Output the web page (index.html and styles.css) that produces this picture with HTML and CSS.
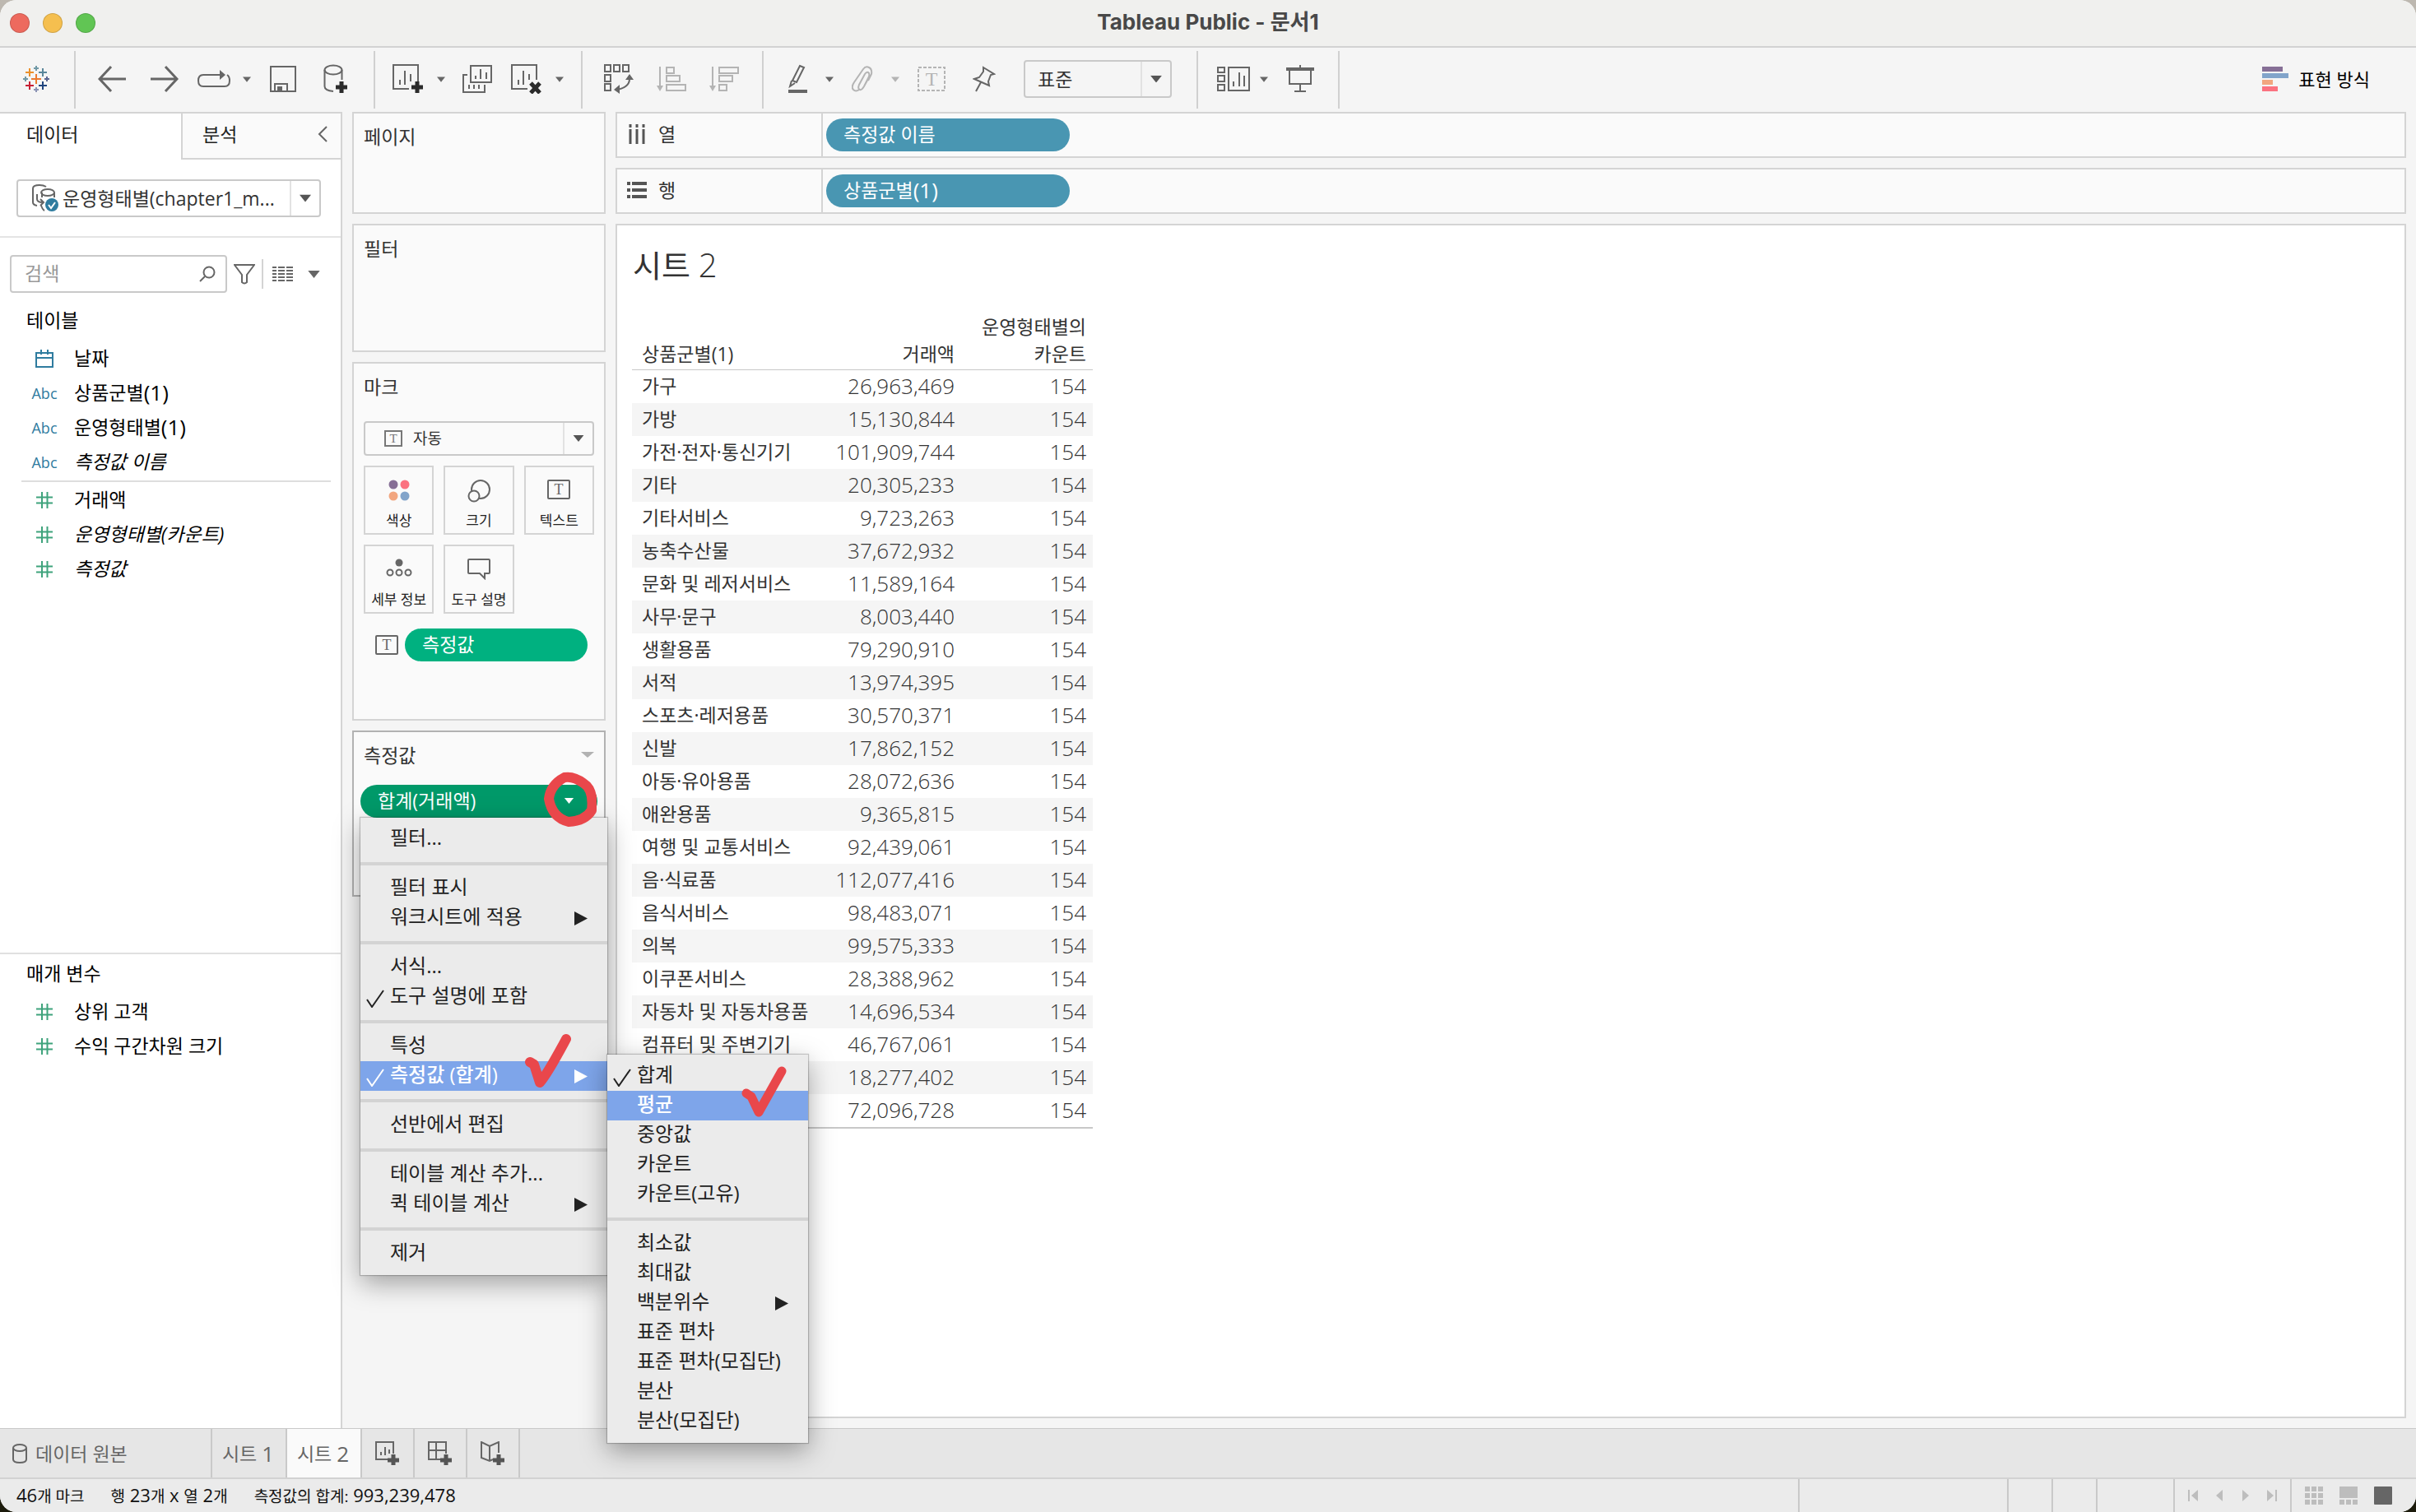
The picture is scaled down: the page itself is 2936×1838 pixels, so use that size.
FILE: index.html
```
<!DOCTYPE html>
<html lang="ko">

<head>
    <meta charset="UTF-8">
    <meta name="viewport" content="width=device-width, initial-scale=1.0">
    <title>Tableau Public - 문서1</title>
    <link rel="stylesheet" href="styles.css">
</head>

<body>
    <!-- shared icons -->
    <svg class="defs" aria-hidden="true">
        <symbol id="i-caret" viewBox="0 0 16 10"><path d="M0 0h16L8 10z" fill="currentColor"/></symbol>
        <symbol id="i-hash" viewBox="0 0 20 20"><path d="M7 0v20M13.500 0v20M0 6.500h20M0 13.500h20" fill="none" stroke="currentColor" stroke-width="2"/></symbol>
        <symbol id="i-check" viewBox="0 0 22 22"><path d="M1 12l6 9L21 1" fill="none" stroke="currentColor" stroke-width="2"/></symbol>
        <symbol id="i-arrow" viewBox="0 0 16 17"><path d="M0 0l16 8.500L0 17z" fill="currentColor"/></symbol>
    </svg>

    <div class="window">
        <header class="titlebar">
            <div class="lights"><span class="red"></span><span class="yellow"></span><span class="green"></span></div>
            <h1>Tableau Public - 문서1</h1>
        </header>

        <div class="toolbar">
            <div class="group">
                <button class="tool wide" aria-label="Tableau">
                    <svg width="34" height="34" viewBox="0 0 34 34" fill="none" stroke-width="2">
                        <path d="M17 11v12M11 17h12" stroke="#eb7b30"/>
                        <path d="M9 4v10M4 9h10" stroke="#eb912c"/>
                        <path d="M25 4v10M20 9h10" stroke="#5b879b"/>
                        <path d="M9 20v10M4 25h10" stroke="#c72035"/>
                        <path d="M25 20v10M20 25h10" stroke="#1f447e"/>
                        <path d="M17 1v6M14 4h6M4 14v6M1 17h6" stroke="#7199a6"/>
                        <path d="M30 14v6M27 17h6" stroke="#5c6692"/>
                        <path d="M17 27v6M14 30h6" stroke="#8b93b5"/>
                    </svg>
                </button>
            </div>
            <div class="group">
                <button class="tool wide" aria-label="실행 취소"><svg width="34" height="34" viewBox="0 0 34 34"><path class="ln thick" d="M16 2L2 17l14 15M2 17h32"/></svg></button>
                <button class="tool wide" aria-label="다시 실행"><svg width="34" height="34" viewBox="0 0 34 34"><path class="ln thick" d="M18 2l14 15-14 15M32 17H0"/></svg></button>
                <button class="tool" aria-label="재생"><svg width="40" height="22" viewBox="0 0 40 22"><path class="ln" d="M28 6H7Q1 6 1 13t6 7h26q6 0 6-7 0-5-3-7"/><path class="fl" d="M27 0l7 6-7 6z"/></svg></button>
                <button class="tool drop" aria-label="재생 옵션"><svg width="10" height="7"><use href="#i-caret"/></svg></button>
                <button class="tool wide" aria-label="저장"><svg width="32" height="32" viewBox="0 0 32 32"><path class="ln" d="M1 1h30v30H1zM6 31V22h15v9"/><path class="fl" d="M9 25h6v6H9z"/></svg></button>
                <button class="tool wide" aria-label="새 데이터 원본"><svg width="30" height="36" viewBox="0 0 30 36"><ellipse class="ln" cx="12" cy="7" rx="10.500" ry="5.500"/><path class="ln" d="M1.500 7v20q0 5 10.500 6M22.500 7v12"/><path class="plus" d="M22 21v14M15 28h14"/></svg></button>
            </div>
            <div class="group">
                <button class="tool" aria-label="새 워크시트"><svg width="38" height="36" viewBox="0 0 38 36"><path class="ln" d="M31 21V1H1v29h19M9 25v-6M15 25V8M22 21v-9"/><path class="plus" d="M30 21v14M23 28h14"/></svg></button>
                <button class="tool drop" aria-label="새 워크시트 옵션"><svg width="10" height="7"><use href="#i-caret"/></svg></button>
                <button class="tool wide" aria-label="시트 복제"><svg width="36" height="34" viewBox="0 0 36 34"><path class="ln" d="M10 1h25v20H10zM16 17v-4M22 17V5M29 17V9M6 12H1v21h26v-9M8 29v-5M14 29v-5M20 29v-5"/></svg></button>
                <button class="tool" aria-label="시트 지우기"><svg width="38" height="36" viewBox="0 0 38 36"><path class="ln" d="M31 19V1H1v29h19M9 25v-6M15 25V8M22 19v-7"/><path class="plus" d="M24 23l11 12M35 23L24 35"/></svg></button>
                <button class="tool drop" aria-label="지우기 옵션"><svg width="10" height="7"><use href="#i-caret"/></svg></button>
            </div>
            <div class="group">
                <button class="tool wide" aria-label="행과 열 바꾸기"><svg width="36" height="36" viewBox="0 0 36 36"><path class="ln" d="M1 1h7v8H1zM12 1h7v8h-7zM23 1h7v8h-7zM1 13h7v8H1zM1 24h7v8H1zM31 18q0 10-15 13"/><path class="fl" d="M26 19l5-7 5 7zM19 25l-7 6 7 5z"/></svg></button>
                <button class="tool wide off" aria-label="오름차순 정렬"><svg width="36" height="32" viewBox="0 0 36 32"><path class="ln" d="M4 1v25M12 2h9v7h-9zM12 12h16v7H12zM12 23h23v7H12z"/><path class="fl" d="M0 24h8l-4 7z"/></svg></button>
                <button class="tool wide off" aria-label="내림차순 정렬"><svg width="36" height="32" viewBox="0 0 36 32"><path class="ln" d="M4 1v25M12 2h23v7H12zM12 12h16v7H12zM12 23h9v7h-9z"/><path class="fl" d="M0 24h8l-4 7z"/></svg></button>
            </div>
            <div class="group last-select">
                <button class="tool" aria-label="하이라이트"><svg width="28" height="36" viewBox="-4 0 28 36"><path class="ln" d="M14 2l5 2-9 18-5-2zM4 20l-2 7 6-4"/><path class="fl" d="M0 31h23v4H0z"/></svg></button>
                <button class="tool drop" aria-label="하이라이트 옵션"><svg width="10" height="7"><use href="#i-caret"/></svg></button>
                <button class="tool off" aria-label="그룹"><svg width="26" height="32" viewBox="0 0 26 32"><path class="ln" d="M21 14l-6 11q-3 5-5 4-3-1-1-6l7-13q2-3 4-2t1 5l-6 12M9 29q-4 3-7 0t1-9L14 4q3-4 7-2t3 8l-4 8"/></svg></button>
                <button class="tool drop off" aria-label="그룹 옵션"><svg width="10" height="7"><use href="#i-caret"/></svg></button>
                <button class="tool wide off" aria-label="마크 레이블 표시"><svg width="34" height="30" viewBox="0 0 34 30"><rect class="ln" x="1" y="1" width="32" height="28" stroke-dasharray="4 2"/><text x="17" y="23" text-anchor="middle" font-family="Liberation Serif, serif" font-size="24" fill="currentColor">T</text></svg></button>
                <button class="tool wide" aria-label="축 고정"><svg width="28" height="32" viewBox="0 0 28 32"><path class="ln" d="M13 2l13 8-4 1-3 8 1 5L2 16l6-2 5-7zM10 20L4 31"/></svg></button>
                <div class="select fit">
                    <select aria-label="맞춤"><option>표준</option></select>
                    <svg width="14" height="9"><use href="#i-caret"/></svg>
                </div>
            </div>
            <div class="group">
                <button class="tool" aria-label="카드 표시/숨기기"><svg width="46" height="30" viewBox="-6 0 46 30"><path class="ln" d="M1 1h8v6H1zM1 11h8v7H1zM1 22h8v7H1zM14 1h25v28H14zM20 24v-6M27 24V7M33 24V11"/></svg></button>
                <button class="tool drop" aria-label="카드 옵션"><svg width="10" height="7"><use href="#i-caret"/></svg></button>
                <button class="tool wide" aria-label="프레젠테이션 모드"><svg width="34" height="34" viewBox="0 0 34 34"><path class="fl" d="M0 3h34v4H0z"/><path class="ln" d="M17 0v4M4 7v16h26V7M17 23v9M10 32h14"/></svg></button>
            </div>
            <button class="showme">
                <svg width="32" height="30" viewBox="0 0 32 30"><path d="M0 0h25v6H0z" fill="#866f96"/><path d="M0 8h32v6H0z" fill="#82a4ca"/><path d="M0 16h13v6H0z" fill="#f2a67f"/><path d="M0 24h19v6H0z" fill="#fb7280"/></svg>
                표현 방식
            </button>
        </div>

        <main class="workspace">
            <aside class="data-pane">
                <div class="pane-tabs">
                    <button class="pane-tab active">데이터</button>
                    <button class="pane-tab">분석 <svg width="12" height="20" viewBox="0 0 12 20"><path class="ln" d="M11 1L2 10l9 9"/></svg></button>
                </div>
                <div class="source">
                    <div class="select">
                        <svg class="lead" width="34" height="34" viewBox="0 0 34 34">
                            <path class="ln" d="M2 5q0-4 8-4 5 0 8 2M2 5v17q0 3 5 4M7 12v6q0 4 7 4M11 18l4 4-4 4M13 10v6M28 10v6M12 26q2 5 4 6"/><ellipse class="ln" cx="20" cy="10" rx="8" ry="4"/>
                            <circle cx="25" cy="25" r="8" fill="#2f7c9f"/><path d="M21 25l3 4 5-7" fill="none" stroke="#fff" stroke-width="2"/>
                        </svg>
                        <select aria-label="데이터 원본"><option>운영형태별(chapter1_m...</option></select>
                        <svg width="14" height="11"><use href="#i-caret"/></svg>
                    </div>
                </div>
                <div class="search-row">
                    <div class="search">
                        <input type="text" placeholder="검색" aria-label="검색">
                        <svg width="20" height="20" viewBox="0 0 20 20"><circle class="ln" cx="12" cy="8" r="6.500"/><path class="ln" d="M7 13l-6 6"/></svg>
                    </div>
                    <button aria-label="필터"><svg width="26" height="26" viewBox="0 0 26 26"><path class="ln" d="M1 2h24l-9 12v9q-3 3-6 0v-9z"/></svg></button>
                    <button class="view-mode" aria-label="보기">
                        <svg width="25" height="20" viewBox="0 0 25 20"><path d="M0 2h25M0 6h25M0 10h25M0 14h25M0 18h25" stroke="#666" stroke-width="2" stroke-dasharray="5 2 8 2 8 0"/></svg>
                        <svg width="15" height="9"><use href="#i-caret"/></svg>
                    </button>
                </div>
                <section class="fields">
                    <h2>테이블</h2>
                    <ul class="dims">
                        <li><span class="type"><svg width="22" height="22" viewBox="0 0 22 22"><path d="M1 4h20v17H1zM1 10h20M7 0v6M15 0v6" fill="none" stroke="currentColor" stroke-width="2"/></svg></span>날짜</li>
                        <li><span class="type">Abc</span>상품군별<span class="lat">(1)</span></li>
                        <li><span class="type">Abc</span>운영형태별<span class="lat">(1)</span></li>
                        <li><span class="type">Abc</span><em>측정값 이름</em></li>
                    </ul>
                    <ul class="measures">
                        <li><span class="type"><svg width="20" height="20"><use href="#i-hash"/></svg></span>거래액</li>
                        <li><span class="type"><svg width="20" height="20"><use href="#i-hash"/></svg></span><em>운영형태별(카운트)</em></li>
                        <li><span class="type"><svg width="20" height="20"><use href="#i-hash"/></svg></span><em>측정값</em></li>
                    </ul>
                </section>
                <section class="params">
                    <h2>매개 변수</h2>
                    <ul class="measures">
                        <li><span class="type"><svg width="20" height="20"><use href="#i-hash"/></svg></span>상위 고객</li>
                        <li><span class="type"><svg width="20" height="20"><use href="#i-hash"/></svg></span>수익 구간차원 크기</li>
                    </ul>
                </section>
            </aside>

            <div class="cards">
                <section class="card pages"><h2>페이지</h2></section>
                <section class="card filters"><h2>필터</h2></section>
                <section class="card marks">
                    <h2>마크</h2>
                    <div class="select mark-type">
                        <svg class="lead" width="22" height="20" viewBox="0 0 22 20"><rect class="ln" x="1" y="1" width="20" height="18"/><text x="11" y="15" text-anchor="middle" font-family="Liberation Serif, serif" font-size="15" fill="currentColor">T</text></svg>
                        <select aria-label="마크 유형"><option>자동</option></select>
                        <svg width="14" height="8"><use href="#i-caret"/></svg>
                    </div>
                    <div class="mark-grid">
                        <button><svg width="26" height="26" viewBox="0 0 26 26"><circle cx="6" cy="6" r="5.500" fill="#866f96"/><circle cx="20" cy="6" r="5.500" fill="#fb7280"/><circle cx="6" cy="20" r="5.500" fill="#f2a67f"/><circle cx="20" cy="20" r="5.500" fill="#82a4ca"/></svg>색상</button>
                        <button><svg width="28" height="28" viewBox="0 0 28 28"><circle class="ln" cx="16" cy="12" r="11"/><circle cx="8" cy="20" r="6.500" fill="#fafafa" stroke="currentColor" stroke-width="2"/></svg>크기</button>
                        <button><svg width="28" height="24" viewBox="0 0 28 24"><rect class="ln" x="1" y="1" width="26" height="22" rx="1"/><text x="14" y="18" text-anchor="middle" font-family="Liberation Serif, serif" font-size="18" fill="currentColor">T</text></svg>텍스트</button>
                        <button><svg width="32" height="22" viewBox="0 0 32 22"><circle class="fl" cx="16" cy="5" r="4.500"/><circle class="ln" cx="5" cy="17" r="3.500"/><circle class="ln" cx="16" cy="17" r="3.500"/><circle class="ln" cx="27" cy="17" r="3.500"/></svg>세부 정보</button>
                        <button><svg width="28" height="26" viewBox="0 0 28 26"><path class="ln" d="M2 1h24q1 0 1 1v15q0 1-1 1h-5v6l-6-6H2q-1 0-1-1V2q0-1 1-1z"/></svg>도구 설명</button>
                    </div>
                    <div class="mark-row">
                        <svg width="28" height="24" viewBox="0 0 28 24"><rect class="ln" x="1" y="1" width="26" height="22" rx="1"/><text x="14" y="18" text-anchor="middle" font-family="Liberation Serif, serif" font-size="18" fill="currentColor">T</text></svg>
                        <button class="pill green">측정값</button>
                    </div>
                </section>
                <section class="card values">
                    <h2>측정값 <svg width="16" height="8" viewBox="0 0 16 8"><path class="fl" d="M0 0h16L8 7z"/></svg></h2>
                    <div class="pill-menu">
                        <button class="pill open">합계(거래액) <svg width="13" height="7"><use href="#i-caret"/></svg></button>
                        <div class="menu" role="menu">
                            <button role="menuitem">필터...</button>
                            <hr>
                            <button role="menuitem">필터 표시</button>
                            <button role="menuitem">워크시트에 적용<svg class="more" width="16" height="17"><use href="#i-arrow"/></svg></button>
                            <hr>
                            <button role="menuitem">서식...</button>
                            <button role="menuitem"><svg class="tick" width="22" height="22"><use href="#i-check"/></svg>도구 설명에 포함</button>
                            <hr>
                            <button role="menuitem">특성</button>
                            <div class="has-sub">
                                <button role="menuitem" class="on"><svg class="tick" width="22" height="22"><use href="#i-check"/></svg>측정값 (합계)<svg class="more" width="16" height="17"><use href="#i-arrow"/></svg></button>
                                <div class="menu sub" role="menu">
                                    <button role="menuitem"><svg class="tick" width="22" height="22"><use href="#i-check"/></svg>합계</button>
                                    <button role="menuitem" class="on">평균</button>
                                    <button role="menuitem">중앙값</button>
                                    <button role="menuitem">카운트</button>
                                    <button role="menuitem">카운트(고유)</button>
                                    <hr>
                                    <button role="menuitem">최소값</button>
                                    <button role="menuitem">최대값</button>
                                    <button role="menuitem">백분위수<svg class="more" width="16" height="17"><use href="#i-arrow"/></svg></button>
                                    <button role="menuitem">표준 편차</button>
                                    <button role="menuitem">표준 편차(모집단)</button>
                                    <button role="menuitem">분산</button>
                                    <button role="menuitem">분산(모집단)</button>
                                    <svg class="ink ink-average" width="56" height="64" viewBox="0 0 56 64"><path d="M6 33l6 4 9 19L49 6" /></svg>
                                </div>
                                <svg class="ink ink-measure" width="58" height="68" viewBox="0 0 58 68"><path d="M7 35l5 3 7 22Q28 50 51 7"/></svg>
                            </div>
                            <hr>
                            <button role="menuitem">선반에서 편집</button>
                            <hr>
                            <button role="menuitem">테이블 계산 추가...</button>
                            <button role="menuitem">퀵 테이블 계산<svg class="more" width="16" height="17"><use href="#i-arrow"/></svg></button>
                            <hr>
                            <button role="menuitem">제거</button>
                        </div>
                        <svg class="ink ink-ring" width="64" height="68" viewBox="0 0 64 68"><path d="M25 7Q8 16 6 33q4 23 24 28 20-1 28-14Q61 22 48 14 36 5 25 7z"/></svg>
                    </div>
                </section>
            </div>

            <div class="sheet">
                <div class="shelf">
                    <div class="shelf-name"><svg width="24" height="24" viewBox="-2 0 24 24"><path d="M2 0v4M10 0v4M18 0v4M2 6v18M10 6v18M18 6v18" stroke="#555" stroke-width="3"/></svg>열</div>
                    <button class="pill blue">측정값 이름</button>
                </div>
                <div class="shelf">
                    <div class="shelf-name"><svg width="24" height="20" viewBox="0 0 24 20"><path d="M0 2h4M0 10h4M0 18h4M6 2h18M6 10h18M6 18h18" stroke="#555" stroke-width="4"/></svg>행</div>
                    <button class="pill blue">상품군별<span class="lat">(1)</span></button>
                </div>
                <section class="view">
                    <h2>시트 <span>2</span></h2>
                    <table>
                        <thead>
                            <tr><th scope="col">상품군별(1)</th><th scope="col">거래액</th><th scope="col">운영형태별의<br>카운트</th></tr>
                        </thead>
                        <tbody>
                            <tr><th scope="row">가구</th><td>26,963,469</td><td>154</td></tr>
                            <tr><th scope="row">가방</th><td>15,130,844</td><td>154</td></tr>
                            <tr><th scope="row">가전·전자·통신기기</th><td>101,909,744</td><td>154</td></tr>
                            <tr><th scope="row">기타</th><td>20,305,233</td><td>154</td></tr>
                            <tr><th scope="row">기타서비스</th><td>9,723,263</td><td>154</td></tr>
                            <tr><th scope="row">농축수산물</th><td>37,672,932</td><td>154</td></tr>
                            <tr><th scope="row">문화 및 레저서비스</th><td>11,589,164</td><td>154</td></tr>
                            <tr><th scope="row">사무·문구</th><td>8,003,440</td><td>154</td></tr>
                            <tr><th scope="row">생활용품</th><td>79,290,910</td><td>154</td></tr>
                            <tr><th scope="row">서적</th><td>13,974,395</td><td>154</td></tr>
                            <tr><th scope="row">스포츠·레저용품</th><td>30,570,371</td><td>154</td></tr>
                            <tr><th scope="row">신발</th><td>17,862,152</td><td>154</td></tr>
                            <tr><th scope="row">아동·유아용품</th><td>28,072,636</td><td>154</td></tr>
                            <tr><th scope="row">애완용품</th><td>9,365,815</td><td>154</td></tr>
                            <tr><th scope="row">여행 및 교통서비스</th><td>92,439,061</td><td>154</td></tr>
                            <tr><th scope="row">음·식료품</th><td>112,077,416</td><td>154</td></tr>
                            <tr><th scope="row">음식서비스</th><td>98,483,071</td><td>154</td></tr>
                            <tr><th scope="row">의복</th><td>99,575,333</td><td>154</td></tr>
                            <tr><th scope="row">이쿠폰서비스</th><td>28,388,962</td><td>154</td></tr>
                            <tr><th scope="row">자동차 및 자동차용품</th><td>14,696,534</td><td>154</td></tr>
                            <tr><th scope="row">컴퓨터 및 주변기기</th><td>46,767,061</td><td>154</td></tr>
                            <tr><th scope="row"></th><td>18,277,402</td><td>154</td></tr>
                            <tr><th scope="row"></th><td>72,096,728</td><td>154</td></tr>
                        </tbody>
                    </table>
                </section>
            </div>
        </main>

        <nav class="sheet-tabs">
            <button class="origin"><svg width="18" height="24" viewBox="0 0 18 24"><ellipse class="ln" cx="9" cy="5" rx="8" ry="4"/><path class="ln" d="M1 5v14q0 4 8 4t8-4V5"/></svg>데이터 원본</button>
            <button>시트 <span class="lat">1</span></button>
            <button class="active">시트 <span class="lat">2</span></button>
            <button class="new" aria-label="새 워크시트"><svg width="30" height="30" viewBox="0 0 30 30"><path class="ln" d="M22 15V1H1v21h14M7 17v-4M12 17V7M17 15v-5"/><path class="plus soft" d="M22 16v13M15 23h14"/></svg></button>
            <button class="new" aria-label="새 대시보드"><svg width="30" height="30" viewBox="0 0 30 30"><path class="ln" d="M22 15V1H1v21h14M1 11h21M10 1v21"/><path class="plus soft" d="M22 16v13M15 23h14"/></svg></button>
            <button class="new" aria-label="새 스토리"><svg width="30" height="30" viewBox="0 0 30 30"><path class="ln" d="M22 14V1l-11 5L1 1v19l10 4 4-2M11 6v18"/><path class="plus soft" d="M22 16v13M15 23h14"/></svg></button>
        </nav>

        <footer class="status">
            <span>46<b>개 마크</b></span>
            <span><b>행</b> 23<b>개</b> x <b>열</b> 2<b>개</b></span>
            <span><b>측정값의 합계:</b> 993,239,478</span>
            <div class="cells">
                <i class="c1"></i><i class="c2"></i><i class="c2"></i><i class="c3"></i>
                <div class="pager">
                    <button aria-label="처음"><svg width="12" height="14" viewBox="0 0 12 14"><path d="M0 0h2v14H0zM12 0v14L4 7z"/></svg></button>
                    <button aria-label="이전"><svg width="8" height="14" viewBox="0 0 8 14"><path d="M8 0v14L0 7z"/></svg></button>
                    <button aria-label="다음"><svg width="8" height="14" viewBox="0 0 8 14"><path d="M0 0v14l8-7z"/></svg></button>
                    <button aria-label="마지막"><svg width="12" height="14" viewBox="0 0 12 14"><path d="M10 0h2v14h-2zM0 0v14l8-7z"/></svg></button>
                </div>
                <div class="layouts">
                    <button aria-label="시트 정렬기"><svg width="22" height="22" viewBox="0 0 22 22"><path d="M0 0h6v6H0zM8 0h6v6H8zM16 0h6v6h-6zM0 8h6v6H0zM8 8h6v6H8zM16 8h6v6h-6zM0 16h6v6H0zM8 16h6v6H8zM16 16h6v6h-6z"/></svg></button>
                    <button aria-label="필름스트립"><svg width="22" height="22" viewBox="0 0 22 22"><path d="M0 0h22v14H0zM0 16h6v6H0zM8 16h6v6H8zM16 16h6v6h-6z"/></svg></button>
                    <button aria-label="시트 탭" class="active"><svg width="22" height="22" viewBox="0 0 22 22"><rect width="22" height="22" rx="1"/></svg></button>
                </div>
            </div>
        </footer>
    </div>
</body>

</html>
```

FILE: styles.css
```
* {
    box-sizing: border-box;
}

body {
    margin: 0;
    background: linear-gradient(#bdb8b0, #1c1b0c);
    font-family: "Open Sans", "Noto Sans CJK KR", sans-serif;
    font-size: 23px;
    line-height: 34px;
    color: #333;
}

h1, h2, ul {
    margin: 0;
    padding: 0;
    font-size: 23px;
    font-weight: 400;
    list-style: none;
}

button, input, select {
    margin: 0;
    padding: 0;
    border: 0;
    background: none;
    font: inherit;
    color: inherit;
}

svg {
    display: block;
    flex: none;
}

.defs {
    position: absolute;
    width: 0;
    height: 0;
}

.ln {
    fill: none;
    stroke: currentColor;
    stroke-width: 2;
}

.thick {
    stroke-width: 3;
}

.fl {
    fill: currentColor;
}

.plus {
    fill: none;
    stroke: #2b2b2b;
    stroke-width: 5;
}

.plus.soft {
    stroke: #555;
}

.lat {
    font-size: 26px;
}

.window {
    display: flex;
    flex-direction: column;
    height: 100vh;
    border-radius: 20px;
    overflow: hidden;
    background: #f5f5f5;
}

/* title bar */
.titlebar {
    position: relative;
    flex: none;
    height: 58px;
    background: #f0f0ee;
    border-bottom: 2px solid #d2d2d2;
}

.titlebar h1 {
    font-family: Inter, "Noto Sans CJK KR", sans-serif;
    font-size: 26px;
    font-weight: 700;
    line-height: 54px;
    text-align: center;
    color: #484848;
}

.lights {
    position: absolute;
    left: 12px;
    top: 16px;
    display: flex;
    gap: 16px;
}

.lights span {
    width: 24px;
    height: 24px;
    border-radius: 50%;
    border: 1px solid rgba(0, 0, 0, 0.15);
}

.red {
    background: #ed6a5e;
}

.yellow {
    background: #f5bf4f;
}

.green {
    background: #61c554;
}

/* toolbar */
.toolbar {
    display: flex;
    flex: none;
    height: 78px;
    padding: 4px 0;
}

.group {
    display: flex;
    align-items: center;
    padding: 0 14px 2px 12px;
    border-right: 2px solid #d0d0d0;
}

.group.last-select {
    padding-right: 30px;
}

.tool {
    display: flex;
    align-items: center;
    justify-content: center;
    width: 56px;
    height: 48px;
    color: #666;
}

.tool.wide {
    width: 64px;
}

.tool.drop {
    width: 24px;
}

.tool.off {
    color: #b4b4b4;
}

.select {
    position: relative;
    display: flex;
    height: 46px;
    border: 2px solid #c9c9c9;
    border-radius: 4px;
}

.select select {
    width: 100%;
    padding: 0 40px 0 15px;
    appearance: none;
    line-height: 38px;
}

.select::after {
    content: "";
    position: absolute;
    top: 0;
    bottom: 0;
    right: 34px;
    width: 2px;
    background: #e2e2e2;
}

.select svg {
    position: absolute;
    right: 10px;
    top: 50%;
    transform: translateY(-50%);
    color: #555;
    pointer-events: none;
}

.select svg.lead {
    left: 16px;
    right: auto;
}

.fit {
    width: 180px;
    margin-left: 16px;
}

.showme {
    display: flex;
    align-items: center;
    gap: 12px;
    margin-left: auto;
    padding: 0 56px 2px 0;
    font-size: 22px;
    color: #000;
}

/* data pane */
.workspace {
    display: flex;
    flex: 1;
    min-height: 0;
    padding-right: 12px;
}

.data-pane {
    display: flex;
    flex-direction: column;
    flex: none;
    width: 416px;
    background: #fff;
    border-top: 2px solid #d4d4d4;
    border-right: 2px solid #d4d4d4;
}

.pane-tabs {
    display: flex;
    height: 56px;
}

.pane-tab {
    display: flex;
    align-items: center;
    justify-content: space-between;
    flex: 1;
    padding: 0 16px 4px 24px;
    background: #fafafa;
    border-left: 2px solid #d4d4d4;
    border-bottom: 2px solid #d4d4d4;
    color: #222;
}

.pane-tab.active {
    flex: 0 0 220px;
    padding-left: 32px;
    background: #fff;
    border-color: transparent;
    border-left: 0;
}

.pane-tab svg {
    color: #666;
}

.source {
    padding: 24px 24px 23px 20px;
    border-bottom: 2px solid #e4e4e4;
}

.source .lead {
    color: #666;
}

.source select {
    padding-left: 54px;
}

.search-row {
    display: flex;
    align-items: center;
    gap: 8px;
    padding: 21px 12px 0;
    color: #666;
}

.search {
    position: relative;
    width: 264px;
}

.search input {
    width: 100%;
    height: 46px;
    padding: 0 48px 2px 16px;
    border: 2px solid #c9c9c9;
    border-radius: 4px;
    background: #fff;
    color: #333;
}

.search input::placeholder {
    color: #999;
}

.search svg {
    position: absolute;
    right: 14px;
    top: 13px;
}

.view-mode {
    display: flex;
    align-items: center;
    gap: 18px;
    height: 36px;
    padding-left: 11px;
    border-left: 2px solid #d4d4d4;
}

.fields {
    flex: 1;
    padding-top: 14px;
}

.params {
    flex: 0 0 578px;
    padding-top: 4px;
    border-top: 2px solid #e0e0e0;
}

.fields h2,
.params h2 {
    padding-left: 32px;
    line-height: 38px;
    color: #000;
}

.fields ul,
.params ul {
    margin: 0 12px 0 26px;
    color: #000;
}

.fields h2 + ul,
.params h2 + ul {
    padding-top: 6px;
}

.fields li,
.params li {
    display: flex;
    align-items: center;
    height: 42px;
}

.dims {
    padding-bottom: 2px;
    border-bottom: 2px solid #dedede;
}

.type {
    display: flex;
    justify-content: center;
    width: 56px;
    margin-right: 8px;
    padding-top: 2px;
    font-size: 18px;
    color: #2f7c9f;
}

.measures .type {
    color: #3fa37c;
}

/* cards */
.cards {
    display: flex;
    flex-direction: column;
    gap: 12px;
    flex: none;
    width: 308px;
    margin: 0 12px;
}

.card {
    background: #fafafa;
    border: 2px solid #d4d4d4;
    padding: 9px 12px;
}

.card h2 {
    display: flex;
    align-items: center;
    justify-content: space-between;
    height: 38px;
}

.pages {
    height: 124px;
}

.filters {
    height: 156px;
}

.marks {
    height: 436px;
}

.mark-type {
    height: 42px;
    margin: 23px 0 12px;
    font-size: 19px;
}

.mark-type svg.lead {
    left: 23px;
    color: #777;
}

.mark-type select {
    padding-left: 58px;
    line-height: 34px;
}

.mark-grid {
    display: grid;
    grid-template-columns: repeat(3, 1fr);
    gap: 12px;
}

.mark-grid button {
    display: flex;
    flex-direction: column;
    align-items: center;
    justify-content: space-between;
    height: 84px;
    padding: 15px 0 3px;
    border: 2px solid #d4d4d4;
    font-size: 17px;
    line-height: 24px;
    white-space: nowrap;
    color: #222;
}

.mark-grid svg,
.mark-row svg {
    color: #666;
}

.mark-row {
    display: flex;
    align-items: center;
    gap: 8px;
    padding: 18px 8px 0 14px;
}

.mark-row .pill {
    flex: 1;
}

.pill {
    display: flex;
    align-items: center;
    justify-content: space-between;
    height: 40px;
    padding: 0 28px 2px 21px;
    border-radius: 20px;
    color: #fff;
}

.pill.green {
    background: #00b180;
}

.pill.blue {
    justify-content: flex-start;
    width: 296px;
    background: #4996b2;
}

.pill.open {
    width: 100%;
    background: #009969;
}

.values {
    height: 202px;
    padding: 9px 8px;
    border-color: #b2b2b2;
}

.values h2 {
    padding: 0 4px;
}

.values h2 svg {
    color: #b2b2b2;
}

.pill-menu {
    position: relative;
    margin-top: 17px;
}

/* pill menus */
.menu {
    position: absolute;
    left: 0;
    top: 100%;
    z-index: 2;
    width: 300px;
    padding: 8px 0;
    background: #ebebeb;
    box-shadow: 0 0 1px 1px rgba(0, 0, 0, 0.2), 0 10px 30px rgba(0, 0, 0, 0.35);
    font-size: 24px;
    color: #222;
}

.menu button {
    position: relative;
    display: flex;
    align-items: center;
    width: 100%;
    height: 36px;
    padding: 0 24px 4px 36px;
    white-space: nowrap;
}

.menu .on {
    background: #7ea5ea;
    color: #fff;
    font-weight: 500;
}

.menu hr {
    height: 4px;
    margin: 10px 0;
    border: 0;
    background: #d3d3d3;
}

.tick {
    position: absolute;
    left: 7px;
    top: 9px;
}

.more {
    position: absolute;
    right: 24px;
    top: 10px;
}

.has-sub {
    position: relative;
}

.menu.sub {
    left: 100%;
    top: -8px;
    width: 244px;
}

/* hand-drawn marks */
.ink {
    position: absolute;
    z-index: 3;
    fill: none;
    stroke: #e9474b;
    stroke-width: 12;
    stroke-linecap: round;
    stroke-linejoin: round;
    pointer-events: none;
}

.ink-ring {
    left: 223px;
    top: -16px;
}

.ink-measure {
    left: 199px;
    top: -34px;
}

.ink-average {
    left: 163px;
    top: 14px;
    stroke-width: 11;
}

/* sheet */
.sheet {
    display: flex;
    flex-direction: column;
    gap: 12px;
    flex: 1;
    min-width: 0;
    padding-bottom: 12px;
}

.shelf {
    display: flex;
    align-items: center;
    gap: 4px;
    height: 56px;
    background: #fafafa;
    border: 2px solid #d4d4d4;
}

.shelf-name {
    display: flex;
    align-items: center;
    gap: 14px;
    width: 250px;
    height: 100%;
    padding: 0 0 2px 12px;
    border-right: 2px solid #d4d4d4;
}

.view {
    flex: 1;
    padding: 20px 18px;
    background: #fff;
    border: 2px solid #d4d4d4;
}

.view h2 {
    padding-left: 1px;
    font-size: 38px;
    line-height: 56px;
}

.view h2 span {
    font-size: 40px;
    font-weight: 300;
}

.view table {
    margin-top: 31px;
    border-spacing: 0;
    border-bottom: 2px solid #c8c8c8;
}

.view th {
    width: 240px;
    padding: 0 0 2px 12px;
    font-weight: 400;
    text-align: left;
}

.view thead th {
    border-bottom: 1px solid #c8c8c8;
    vertical-align: bottom;
    line-height: 33px;
}

.view thead th + th {
    width: 160px;
    padding: 0 8px 2px 0;
    text-align: right;
}

.view tbody tr {
    height: 40px;
}

.view tbody tr:nth-child(even) {
    background: #f5f5f5;
}

.view td {
    padding: 0 8px 2px 0;
    text-align: right;
    font-size: 26px;
    font-weight: 350;
}

/* bottom bars */
.sheet-tabs {
    display: flex;
    flex: none;
    height: 60px;
    background: #e6e6e6;
    border-top: 1px solid #c9c9c9;
    color: #666;
}

.sheet-tabs button {
    display: flex;
    align-items: center;
    justify-content: center;
    gap: 6px;
    width: 91px;
    padding-right: 2px;
    border-right: 2px solid #c9c9c9;
}

.sheet-tabs .origin {
    justify-content: flex-start;
    gap: 10px;
    width: 258px;
    padding-left: 15px;
}

.sheet-tabs .active {
    background: #fafafa;
}

.sheet-tabs .new {
    width: 64px;
    padding: 0;
}

.status {
    display: flex;
    align-items: center;
    flex: none;
    height: 42px;
    padding-left: 20px;
    gap: 32px;
    background: #ebebeb;
    border-top: 2px solid #d2d2d2;
    font-size: 22px;
    color: #111;
}

.status b {
    font-size: 19px;
    font-weight: 400;
}

.cells {
    display: flex;
    height: 100%;
    margin-left: auto;
    color: #bdbdbd;
}

.cells > * {
    border-left: 2px solid #c9c9c9;
}

.c1 {
    width: 254px;
}

.c2 {
    width: 54px;
}

.c3 {
    width: 94px;
}

.pager,
.layouts {
    display: flex;
    align-items: center;
}

.pager {
    width: 142px;
    padding-left: 6px;
}

.pager button {
    display: flex;
    justify-content: center;
    width: 32px;
}

.layouts {
    gap: 20px;
    padding: 0 29px 0 16px;
}

.cells svg {
    fill: currentColor;
}

.cells .active {
    color: #666;
}
```
